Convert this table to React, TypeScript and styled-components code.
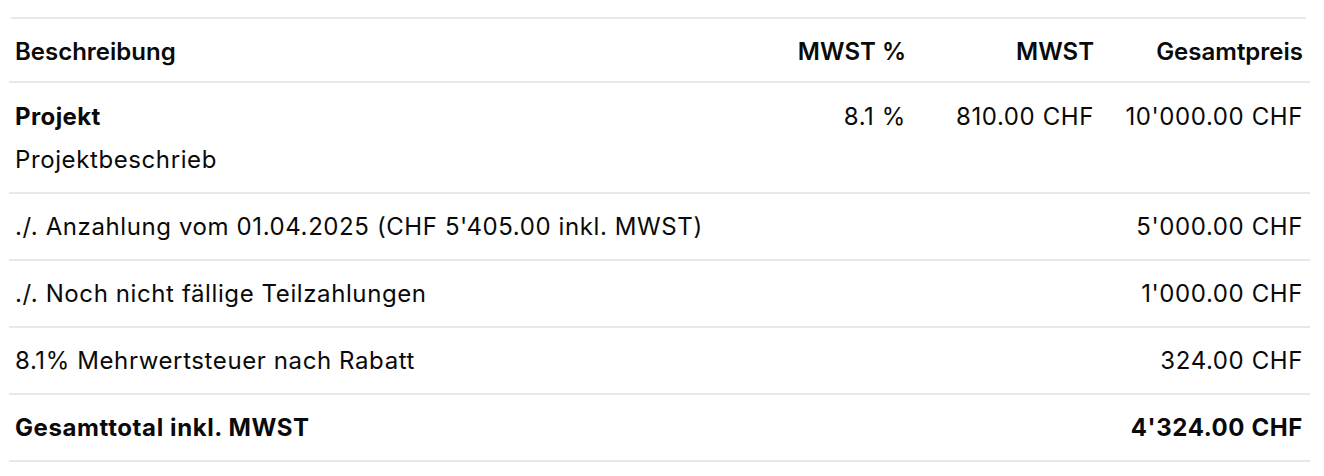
import styled, { createGlobalStyle } from 'styled-components'

const colors = {
  text: '#0a0a0a',
  line: '#e8e8ea',
}

const GlobalStyle = createGlobalStyle`
  body {
    margin: 0;
    background: #ffffff;
    font-family: Inter, "Noto Sans", sans-serif;
    color: ${colors.text};
  }
`

const Page = styled.div`
  padding: 17px 14px 0 9px;
`

const TopRule = styled.div`
  height: 2px;
  margin: 0 4px 0 2px;
  background-color: ${colors.line};
`

const Table = styled.div`
  display: flex;
  flex-direction: column;
`

const Row = styled.div<{ height?: number; top?: boolean }>`
  align-items: ${({ top }) => (top ? 'start' : 'center')};
  border-bottom: 2px solid ${colors.line};
  display: grid;
  grid-template-columns: 1fr 190px 188px 209px;
  height: ${({ height }) => height ?? 65}px;
  box-sizing: content-box;
  font-size: 24px;
`

const HeadRow = styled(Row)`
  padding-top: 3px;
  height: 59px;
`

type Weight = 'regular' | 'head' | 'bold'

const weights: Record<Weight, { weight: number; spacing: string }> = {
  regular: { weight: 400, spacing: '0.6px' },
  head: { weight: 600, spacing: '0' },
  bold: { weight: 700, spacing: '0.6px' },
}

const Cell = styled.div<{ right?: boolean; kind?: Weight }>`
  font-weight: ${({ kind }) => weights[kind ?? 'regular'].weight};
  letter-spacing: ${({ kind }) => weights[kind ?? 'regular'].spacing};
  line-height: 40px;
  padding: 0 7px 0 6px;
  text-align: ${({ right }) => (right ? 'right' : 'left')};
  white-space: nowrap;
`

const ItemCell = styled(Cell)`
  padding-top: 14px;
`

const ValueCell = styled(Cell)`
  padding-top: 14px;
`

const Title = styled.div`
  font-weight: 700;
  letter-spacing: 0.4px;
`

const Description = styled.div`
  font-weight: 400;
  margin-top: 3px;
`

interface Line {
  label: string
  amount: string
  bold?: boolean
}

const lines: Line[] = [
  { label: "./. Anzahlung vom 01.04.2025 (CHF 5'405.00 inkl. MWST)", amount: "5'000.00 CHF" },
  { label: './. Noch nicht fällige Teilzahlungen', amount: "1'000.00 CHF" },
  { label: '8.1% Mehrwertsteuer nach Rabatt', amount: '324.00 CHF' },
  { label: 'Gesamttotal inkl. MWST', amount: "4'324.00 CHF", bold: true },
]

const App = () => (
  <>
    <GlobalStyle />
    <Page>
      <TopRule />
      <Table>
        <HeadRow>
          <Cell kind="head">{'Beschreibung'}</Cell>
          <Cell kind="head" right>{'MWST %'}</Cell>
          <Cell kind="head" right>{'MWST'}</Cell>
          <Cell kind="head" right>{'Gesamtpreis'}</Cell>
        </HeadRow>
        <Row height={109} top>
          <ItemCell>
            <Title>{'Projekt'}</Title>
            <Description>{'Projektbeschrieb'}</Description>
          </ItemCell>
          <ValueCell right>{'8.1 %'}</ValueCell>
          <ValueCell right>{'810.00 CHF'}</ValueCell>
          <ValueCell right>{"10'000.00 CHF"}</ValueCell>
        </Row>
        {lines.map((line) => (
          <Row key={line.label}>
            <Cell kind={line.bold ? 'bold' : 'regular'}>{line.label}</Cell>
            <Cell />
            <Cell />
            <Cell right kind={line.bold ? 'bold' : 'regular'}>
              {line.amount}
            </Cell>
          </Row>
        ))}
      </Table>
    </Page>
  </>
)

export default App
